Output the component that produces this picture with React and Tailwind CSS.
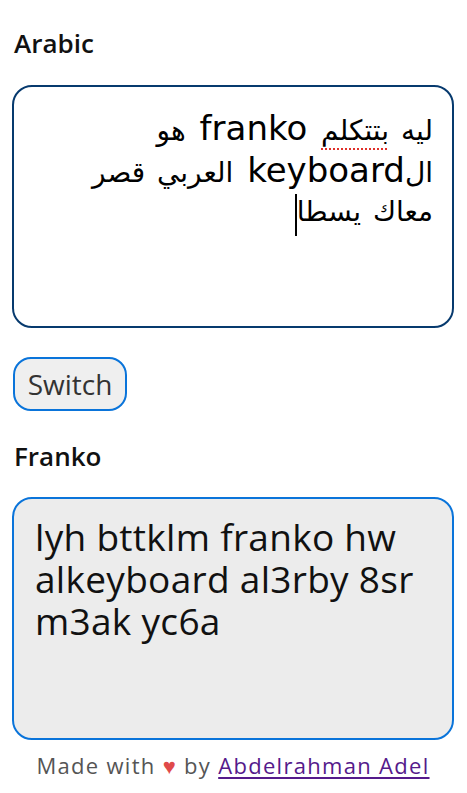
import React from 'react';

const Ar = ({ children }) => <span className="text-[28px] leading-[30px]">{children}</span>;

export default function App() {
  return (
    <div className="min-h-screen bg-white pl-[12px] pr-[13px] pt-[27px] font-['Open_Sans',sans-serif] text-black">
      {/* Arabic input */}
      <div className="h-[32px] pl-[2px] text-[26px] font-semibold leading-[32px] text-[#111]">Arabic</div>
      <div
        dir="rtl"
        className="mt-[26px] h-[243px] rounded-[20px] border-2 border-[#073a6e] bg-white px-[19px] pt-[19px] font-['DejaVu_Sans',sans-serif] text-[34px] [word-spacing:3px]"
      >
        <div className="leading-[45px]">
          <Ar>ليه </Ar>
          <Ar>
            <span className="underline decoration-dotted decoration-[#e0302a] decoration-2 underline-offset-[8px]">بتتكلم</span>
          </Ar>{' '}
          franko <Ar>هو</Ar>
        </div>
        <div className="leading-[39px]">
          <Ar>ال</Ar>keyboard <Ar>العربي قصر</Ar>
        </div>
        <div className="leading-[39px]">
          <Ar>معاك يسطا</Ar>
          <span className="inline-block h-[42px] w-[2px] bg-black align-[-15px]" />
        </div>
      </div>

      {/* Switch */}
      <button className="ml-px mt-[29px] flex h-[54px] w-[114px] items-center justify-center rounded-[18px] border-2 border-[#0a74da] bg-[#efefef] text-[28px] leading-none text-[#333]">
        Switch
      </button>

      {/* Franko output */}
      <div className="mt-[29px] h-[32px] pl-[2px] text-[26px] font-semibold leading-[32px] text-[#111]">Franko</div>
      <div className="mt-[25px] h-[243px] rounded-[20px] border-2 border-[#0a74da] bg-[#ececec] px-[21px] pt-[17px] text-[37px] leading-[42px] tracking-[0.3px] text-[#111]">
        lyh bttklm franko hw alkeyboard al3rby 8sr m3ak yc6a
      </div>

      <p className="mt-[10px] text-center text-[22px] leading-[30px] tracking-[1.3px] text-[#555]">
        Made with <span className="text-[#e04a4a]">♥</span> by{' '}
        <a href="#" className="text-[#551a8b] underline underline-offset-[3px]">
          Abdelrahman Adel
        </a>
      </p>
    </div>
  );
}
